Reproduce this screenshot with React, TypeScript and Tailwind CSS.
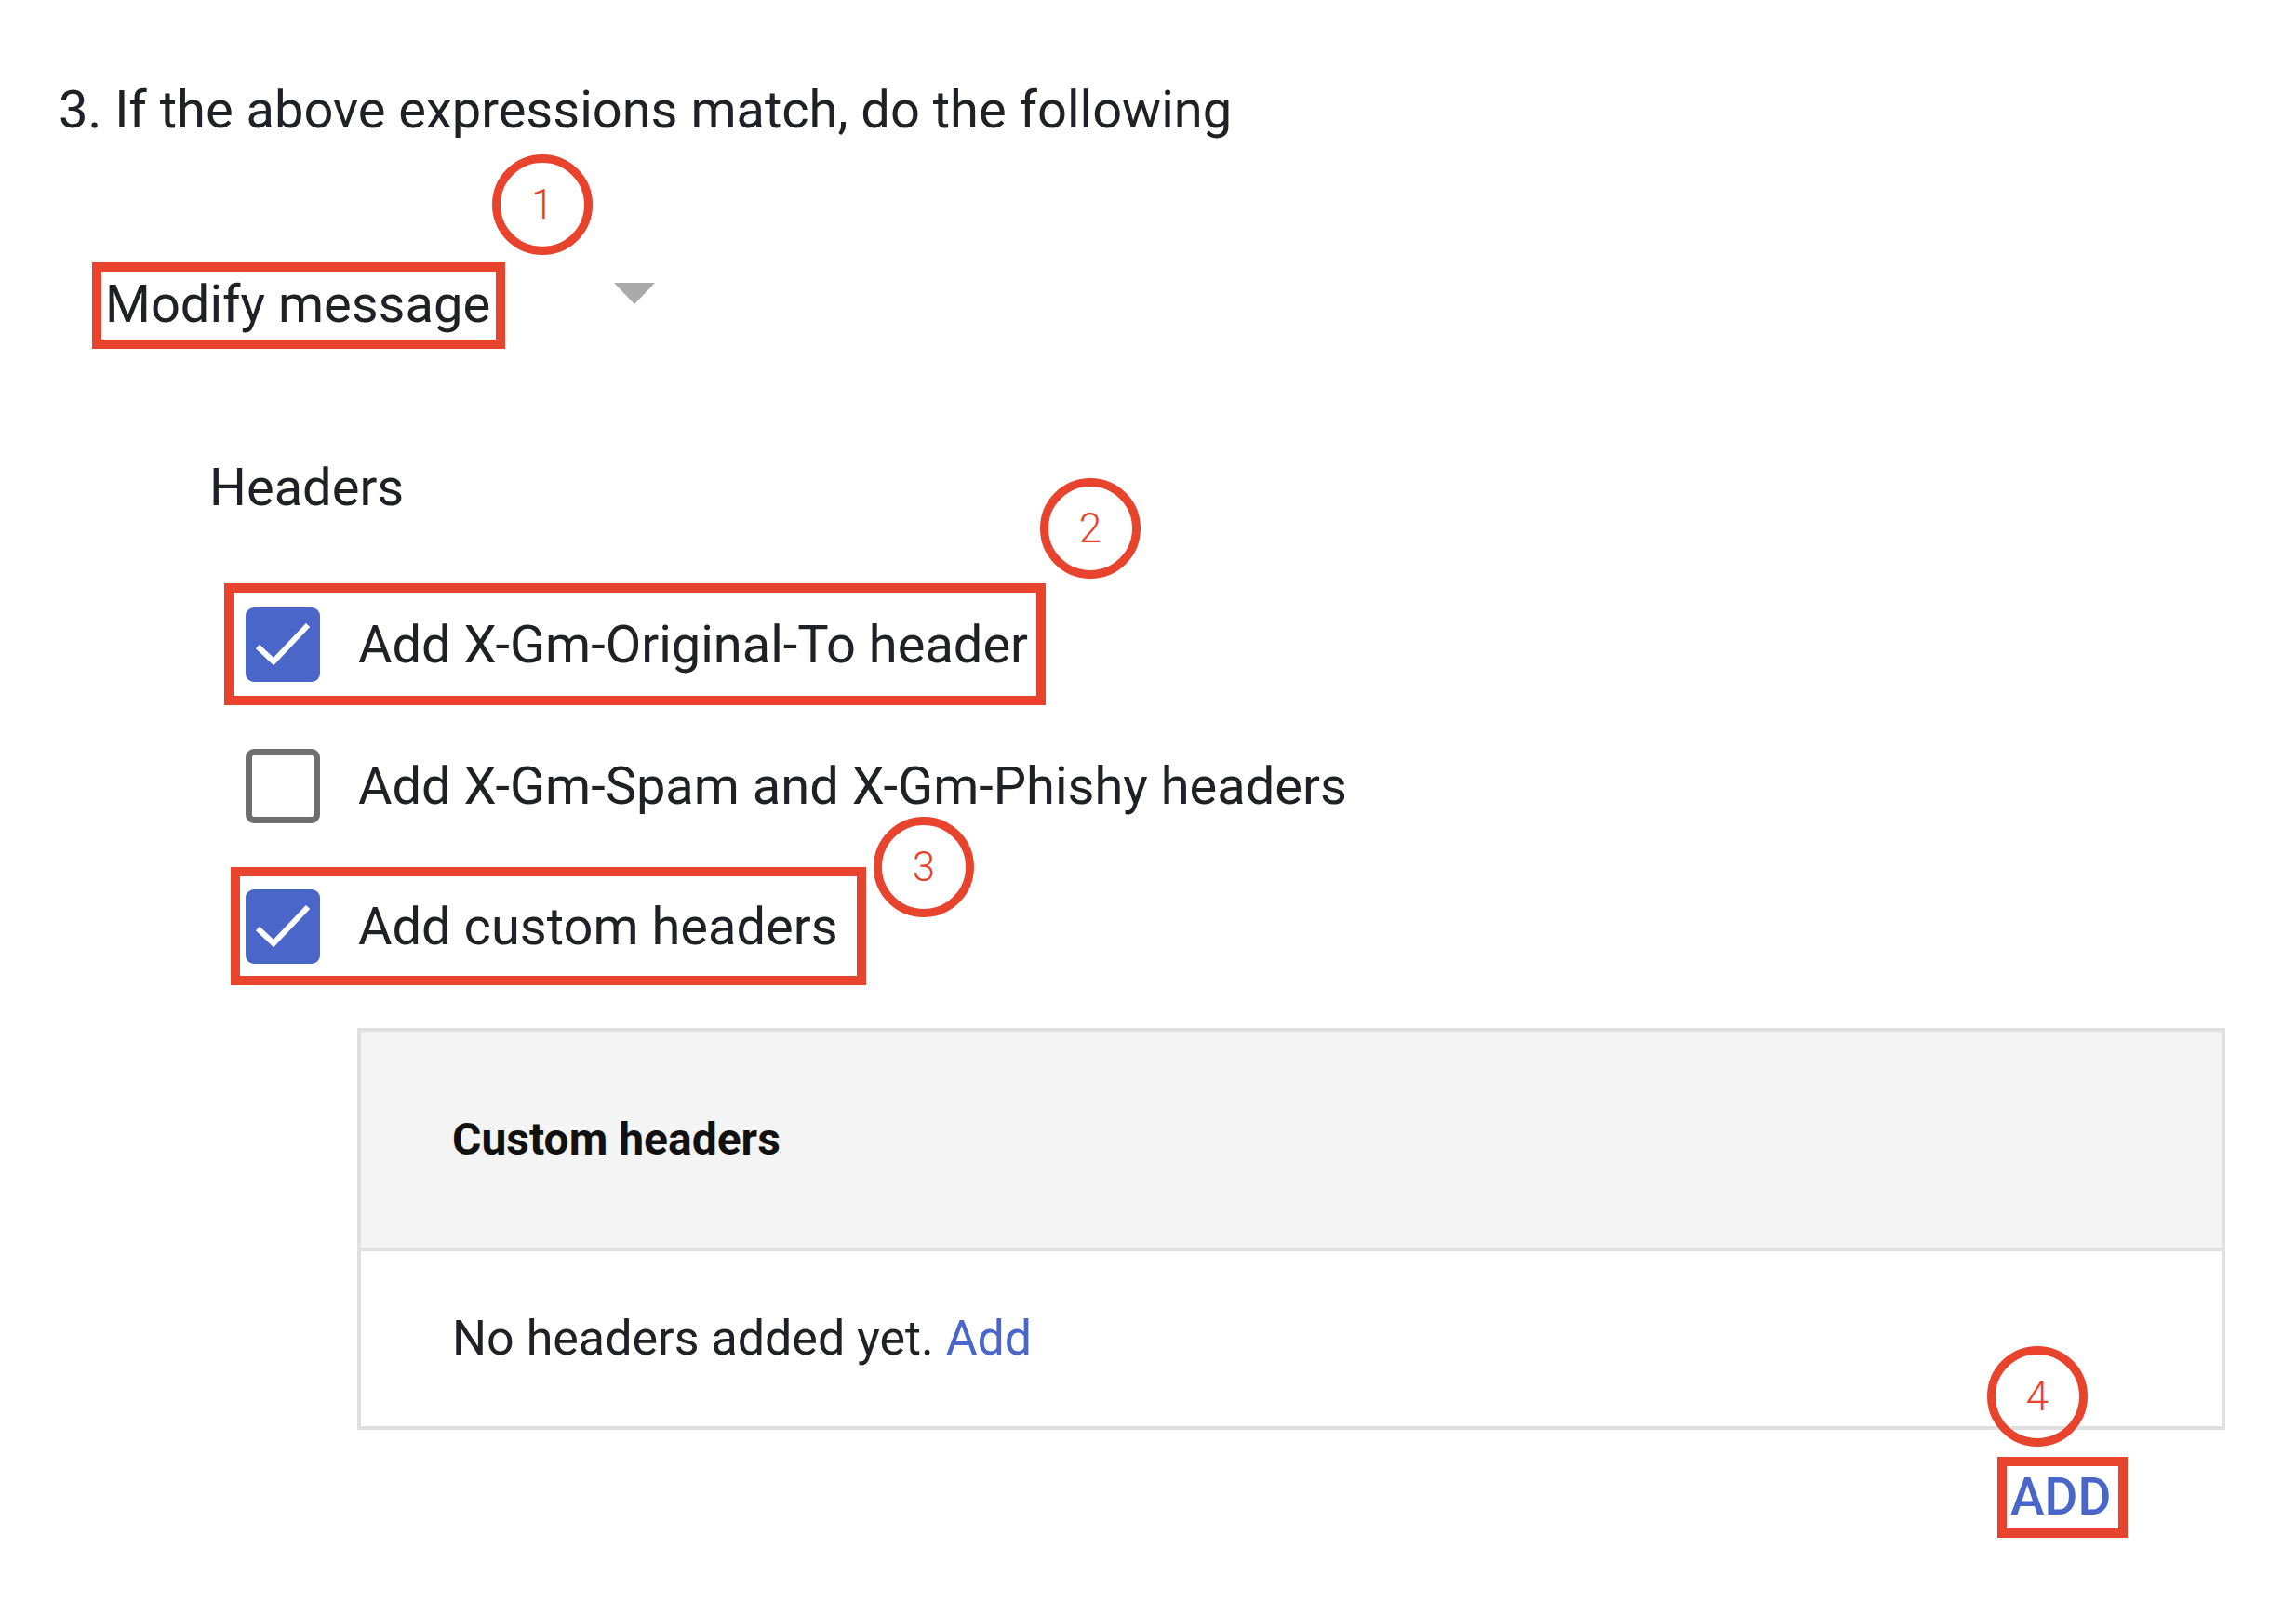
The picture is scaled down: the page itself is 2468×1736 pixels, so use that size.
function Badge({ n, className }: { n: string; className: string }) {
  return (
    <div
      className={`absolute w-[108px] h-[108px] rounded-full border-[9px] border-[#e8432d] bg-transparent flex items-center justify-center text-[44px] leading-none font-light text-[#e8432d] ${className}`}
    >
      {n}
    </div>
  )
}

function Checkbox({ checked }: { checked: boolean }) {
  if (!checked) {
    return <div className="w-[80px] h-[80px] shrink-0 rounded-[9px] border-[7px] border-[#6f6f6f] bg-white" />
  }
  return (
    <div className="w-[80px] h-[80px] shrink-0 rounded-[9px] bg-[#4a66c9]">
      <svg width="80" height="80" viewBox="0 0 80 80">
        <polyline points="13,42 30,58 67,19" fill="none" stroke="#ffffff" strokeWidth="6" />
      </svg>
    </div>
  )
}

export default function App() {
  return (
    <div
      className="relative w-[2468px] h-[1736px] bg-white text-[#202124] overflow-hidden"
      style={{ fontFamily: "Roboto, 'Noto Sans', sans-serif" }}
    >
      {/* step title */}
      <div className="pl-[63px] pt-[88px] text-[56px] leading-[60px]">3. If the above expressions match, do the following</div>

      {/* action select */}
      <div className="flex items-start mt-[134px]">
        <div className="ml-[99px] w-[444px] h-[93px] border-[10px] border-[#e8432d] flex items-center pl-[4px] pb-[4px]">
          <span className="text-[56px] leading-none whitespace-nowrap">Modify message</span>
        </div>
        <svg className="ml-[117px] mt-[22px]" width="44" height="23" viewBox="0 0 44 23">
          <polygon points="0,0 44,0 22,23" fill="#aaaaaa" />
        </svg>
      </div>

      <div className="pl-[225px] mt-[119px] text-[56px] leading-[60px]">Headers</div>

      {/* checkbox rows */}
      <div className="mt-[73px] flex">
        <div className="ml-[241px] h-[131px] border-[10px] border-[#e8432d] flex items-center pl-[13px] pr-[9px]">
          <Checkbox checked />
          <span className="ml-[41px] text-[56px] leading-none whitespace-nowrap">Add X-Gm-Original-To header</span>
        </div>
      </div>

      <div className="mt-[47px] flex">
        <div className="ml-[264px] h-[80px] flex items-center">
          <Checkbox checked={false} />
          <span className="ml-[41px] text-[56px] leading-none whitespace-nowrap">Add X-Gm-Spam and X-Gm-Phishy headers</span>
        </div>
      </div>

      <div className="mt-[47px] flex">
        <div className="ml-[248px] h-[127px] border-[10px] border-[#e8432d] flex items-center pl-[6px] pr-[20px]">
          <Checkbox checked />
          <span className="ml-[41px] text-[56px] leading-none whitespace-nowrap">Add custom headers</span>
        </div>
      </div>

      {/* custom headers table */}
      <div className="ml-[384px] mt-[46px] w-[2008px] border-[4px] border-[#e0e0e0]">
        <div className="h-[232px] bg-[#f4f4f4] flex items-center pl-[98px] border-b-[4px] border-[#e0e0e0] box-content">
          <span className="text-[48px] leading-none font-bold text-[#111111]">Custom headers</span>
        </div>
        <div className="h-[188px] flex items-center pl-[98px]">
          <span className="text-[52px] leading-none">
            No headers added yet. <span className="text-[#4a66c9]">Add</span>
          </span>
        </div>
      </div>

      <div className="mt-[29px] flex">
        <div className="ml-[2147px] w-[140px] h-[87px] border-[10px] border-[#e8432d] flex items-center pl-[4px]">
          <span className="text-[55px] leading-none font-medium text-[#4a66c9]">ADD</span>
        </div>
      </div>

      {/* numbered callouts */}
      <Badge n="1" className="left-[529px] top-[166px]" />
      <Badge n="2" className="left-[1118px] top-[514px]" />
      <Badge n="3" className="left-[939px] top-[878px]" />
      <Badge n="4" className="left-[2136px] top-[1447px]" />
    </div>
  )
}
